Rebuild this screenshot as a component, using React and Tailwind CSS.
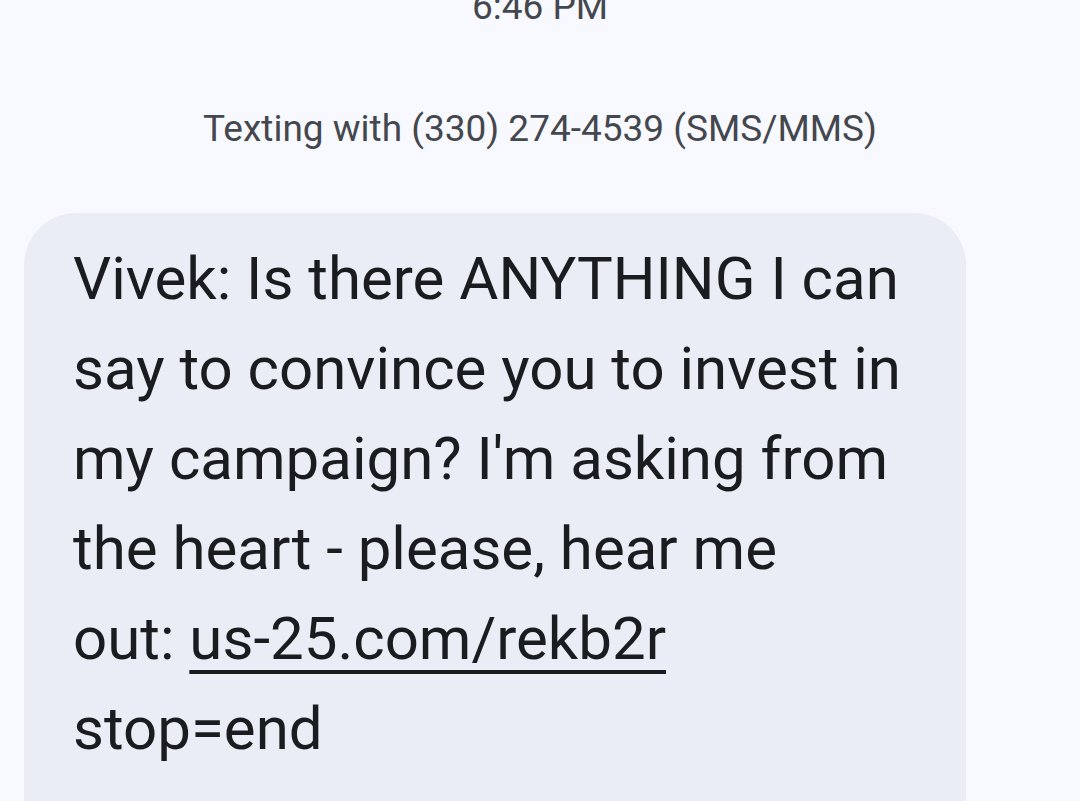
export default function App() {
  return (
    <div
      className="h-[801px] w-[1080px] overflow-hidden bg-[#f8f9fe]"
      style={{ fontFamily: 'Roboto, "Liberation Sans", sans-serif' }}
    >
      {/* timestamp + thread info */}
      <div className="flex flex-col items-center text-[#44474e]">
        <div className="mt-[-13px] text-[37px] leading-[40px]">6:46 PM</div>
        <div className="mt-[82px] text-[37px] leading-[40px]">Texting with (330) 274-4539 (SMS/MMS)</div>
      </div>

      {/* message bubble */}
      <div className="ml-[24px] mt-[64px] h-[589px] w-[942px] rounded-t-[52px] border-b border-[#c9cdd8] bg-[#eaedf5] px-[49px] pt-[21px] text-[60px] leading-[90px] text-[#1b1c20]">
        <p>
          Vivek: Is there ANYTHING I can
          <br />
          say to convince you to invest in
          <br />
          my campaign? I'm asking from
          <br />
          the heart - please, hear me
          <br />
          out: <span className="underline decoration-[4px] underline-offset-[11px]">us-25.com/rekb2r</span>
          <br />
          stop=end
        </p>
      </div>
    </div>
  );
}
